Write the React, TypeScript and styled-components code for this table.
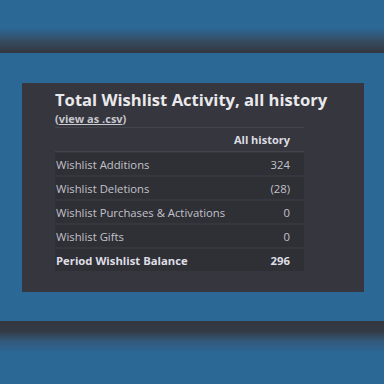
import * as React from "react";
import styled, { createGlobalStyle } from "styled-components";

const GlobalStyle = createGlobalStyle`
  html, body {
    margin: 0;
    padding: 0;
    background: #2b6896;
  }
  body {
    font-family: "Open Sans", "Liberation Sans", sans-serif;
  }
`;

const Page = styled.div`
  width: 384px;
  height: 384px;
  overflow: hidden;
  display: flex;
  flex-direction: column;
  background: #2b6896;
`;

const TopShade = styled.div`
  height: 53px;
  flex: none;
  background: linear-gradient(
    to bottom,
    #2b6896 0px,
    #2b6896 28px,
    #364a5e 42px,
    #33363f 53px
  );
`;

const BottomShade = styled.div`
  height: 63px;
  flex: none;
  margin-top: auto;
  background: linear-gradient(
    to bottom,
    #32363f 0px,
    #343a45 10px,
    #33587a 20px,
    #2b6896 32px
  );
`;

const Card = styled.div`
  margin: 30px 20px 0 22px;
  background: #36363e;
  padding: 6px 32px 19px 33px;
`;

const Title = styled.h2`
  margin: 0;
  font-size: 16.6px;
  font-weight: 700;
  color: #e9e9ec;
  line-height: 22px;
`;

const CsvLink = styled.div`
  font-size: 11px;
  font-weight: 700;
  color: #c8c8cf;
  line-height: 15px;
  margin-bottom: 1px;

  a {
    color: inherit;
    text-decoration: underline;
  }
`;

const Table = styled.div`
  width: 249px;
  display: flex;
  flex-direction: column;
`;

const HeaderRow = styled.div`
  display: flex;
  justify-content: flex-end;
  align-items: center;
  height: 23px;
  padding-right: 14px;
  border-top: 1px solid #44444d;
  border-bottom: 1px solid #44444d;
  font-size: 11px;
  font-weight: 700;
  color: #dcdce2;
  margin-bottom: 1px;
`;

const Row = styled.div<{ $bold?: boolean }>`
  display: flex;
  justify-content: space-between;
  align-items: center;
  height: 22px;
  padding: 0 14px 0 1px;
  margin-bottom: 2px;
  background: #2f2f36;
  font-size: 11.3px;
  font-weight: ${(p) => (p.$bold ? 700 : 400)};
  color: ${(p) => (p.$bold ? "#dedee4" : "#c2c2ca")};
`;

const rows = [
  { label: "Wishlist Additions", value: "324" },
  { label: "Wishlist Deletions", value: "(28)" },
  { label: "Wishlist Purchases & Activations", value: "0" },
  { label: "Wishlist Gifts", value: "0" },
  { label: "Period Wishlist Balance", value: "296", bold: true },
];

export default function App() {
  return (
    <Page>
      <GlobalStyle />
      <TopShade />
      <Card>
        <Title>Total Wishlist Activity, all history</Title>
        <CsvLink>
          (<a href="#">view as .csv</a>)
        </CsvLink>
        <Table>
          <HeaderRow>All history</HeaderRow>
          {rows.map((r) => (
            <Row key={r.label} $bold={r.bold}>
              <span>{r.label}</span>
              <span>{r.value}</span>
            </Row>
          ))}
        </Table>
      </Card>
      <BottomShade />
    </Page>
  );
}
